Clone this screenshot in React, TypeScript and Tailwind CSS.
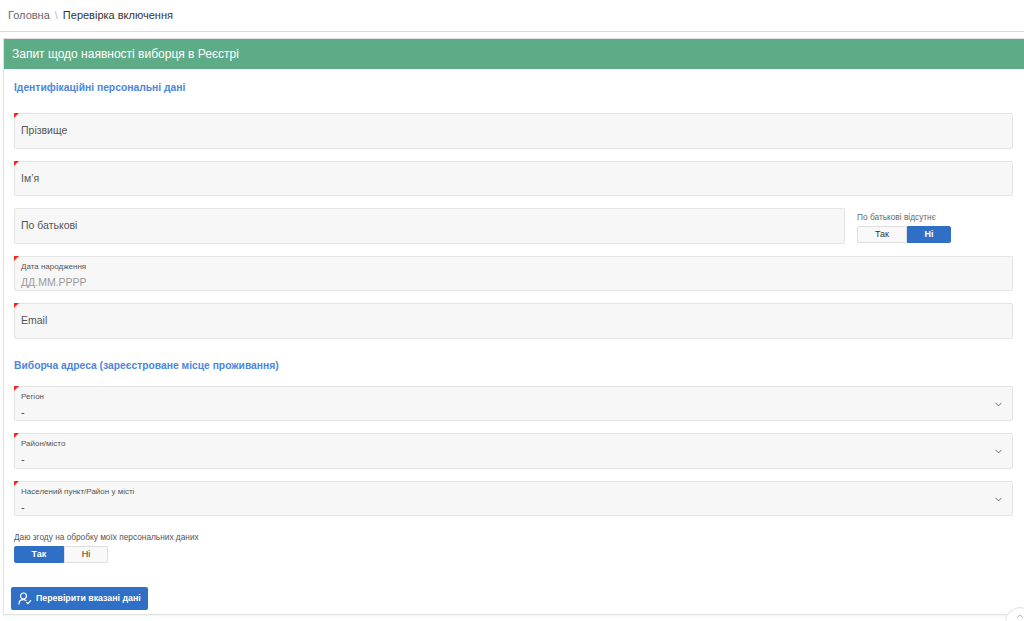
import { ChevronDown, ChevronUp } from "lucide-react";

function Corner() {
  return (
    <span className="absolute left-[-1px] top-[-1px] h-0 w-0 border-r-[5px] border-t-[5px] border-r-transparent border-t-[#f02a1d]" />
  );
}

function TextField({ placeholder, required = true }: { placeholder: string; required?: boolean }) {
  return (
    <div className="relative flex h-[35.5px] w-full items-center rounded-[2px] border border-[#e4e4e4] bg-[#f7f7f7] px-[6px] text-[10.5px] text-[#555]">
      {required && <Corner />}
      <span className="pt-[1px]">{placeholder}</span>
    </div>
  );
}

function LabeledField({ label, value, select }: { label: string; value: string; select?: boolean }) {
  return (
    <div className="relative flex h-[35.5px] flex-col rounded-[2px] border border-[#e4e4e4] bg-[#f7f7f7] px-[6px]">
      <Corner />
      <span className="mt-[4px] text-[8px] leading-[11px] text-[#555]">{label}</span>
      <span className={"mt-[3px] leading-[14px] " + (select ? "text-[11px] text-[#444]" : "text-[10.5px] text-[#9a9a9a]")}>
        {value}
      </span>
      {select && (
        <ChevronDown className="absolute right-[8px] top-[12px] h-[11px] w-[11px] text-[#666]" strokeWidth={2} />
      )}
    </div>
  );
}

function Toggle({ yes }: { yes: boolean }) {
  return (
    <div className="flex h-[17px] text-[9px] leading-[15px]">
      <span
        className={
          "flex w-[50px] items-center justify-center rounded-l-[2px] border " +
          (yes ? "border-[#2f6fc6] bg-[#2f6fc6] font-bold text-white" : "border-[#dedede] bg-[#f9f9f9] text-[#333]")
        }
      >
        Так
      </span>
      <span
        className={
          "flex w-[44px] items-center justify-center rounded-r-[2px] border " +
          (!yes ? "border-[#2f6fc6] bg-[#2f6fc6] font-bold text-white" : "border-[#dedede] bg-[#f9f9f9] text-[#333]")
        }
      >
        Ні
      </span>
    </div>
  );
}

export default function App() {
  return (
    <div className="relative h-[621px] overflow-hidden bg-white font-['Liberation_Sans',Arial,sans-serif]">
      <div className="flex h-[32px] items-center border-b border-[#dadada] px-[8px] text-[11px]">
        <span className="text-[#666]">Головна</span>
        <span className="mx-[5px] text-[#bbb]">\</span>
        <span className="text-[#333]">Перевірка включення</span>
      </div>

      <div className="ml-[3px] mt-[6px] w-[1023px] border border-[#e2e2e2] shadow-[0_1px_2px_rgba(0,0,0,0.06)]">
        <div className="flex h-[30px] items-center bg-[#5eac87] px-[8px] text-[12px] text-white">
          Запит щодо наявності виборця в Реєстрі
        </div>

        <div className="pb-[4px] pl-[10px] pr-[12px] pt-[12px]">
          <h3 className="text-[10.3px] font-bold leading-[14px] text-[#4a86e0]">Ідентифікаційні персональні дані</h3>

          <div className="mt-[18px] flex flex-col gap-[12px]">
            <TextField placeholder="Прізвище" />
            <TextField placeholder="Ім’я" />
            <div className="flex items-start gap-[12px]">
              <div className="flex-1">
                <TextField placeholder="По батькові" required={false} />
              </div>
              <div className="w-[94px] pt-[4px]">
                <div className="mb-[3px] text-[8.3px] leading-[11px] text-[#666]">По батькові відсутнє</div>
                <Toggle yes={false} />
              </div>
              <div className="w-[50px]" />
            </div>
            <LabeledField label="Дата народження" value="ДД.ММ.РРРР" />
            <TextField placeholder="Email" />
          </div>

          <h3 className="mt-[20px] text-[10.3px] font-bold leading-[14px] text-[#4a86e0]">
            Виборча адреса (зареєстроване місце проживання)
          </h3>

          <div className="mt-[13px] flex flex-col gap-[12px]">
            <LabeledField label="Регіон" value="-" select />
            <LabeledField label="Район/місто" value="-" select />
            <LabeledField label="Населений пункт/Район у місті" value="-" select />
          </div>

          <div className="mt-[16px] text-[8.3px] leading-[11px] text-[#555]">Даю згоду на обробку моїх персональних даних</div>
          <div className="mt-[3px] w-[95px]">
            <Toggle yes={true} />
          </div>

          <button className="ml-[-3px] mt-[24px] flex h-[23px] items-center gap-[4px] rounded-[2px] bg-[#2f6fc6] pl-[7px] pr-[7px] text-[8.8px] font-bold text-white">
            <svg width="14" height="13" viewBox="0 0 14 13" fill="none" stroke="white" strokeWidth="1.2" strokeLinecap="round">
              <circle cx="5.5" cy="4" r="3" />
              <path d="M1 12c0-2.6 2-4.3 4.5-4.3 1 0 1.8.2 2.5.7" />
              <path d="M8.5 10.3l1.4 1.3 2.8-3" />
            </svg>
            Перевірити вказані дані
          </button>
        </div>
      </div>

      <div className="absolute left-[1005px] top-[607px] flex h-[30px] w-[30px] justify-center rounded-full border border-[#e3e3e3] bg-white pt-[3px]">
        <ChevronUp className="h-[10px] w-[10px] text-[#999]" />
      </div>
    </div>
  );
}
